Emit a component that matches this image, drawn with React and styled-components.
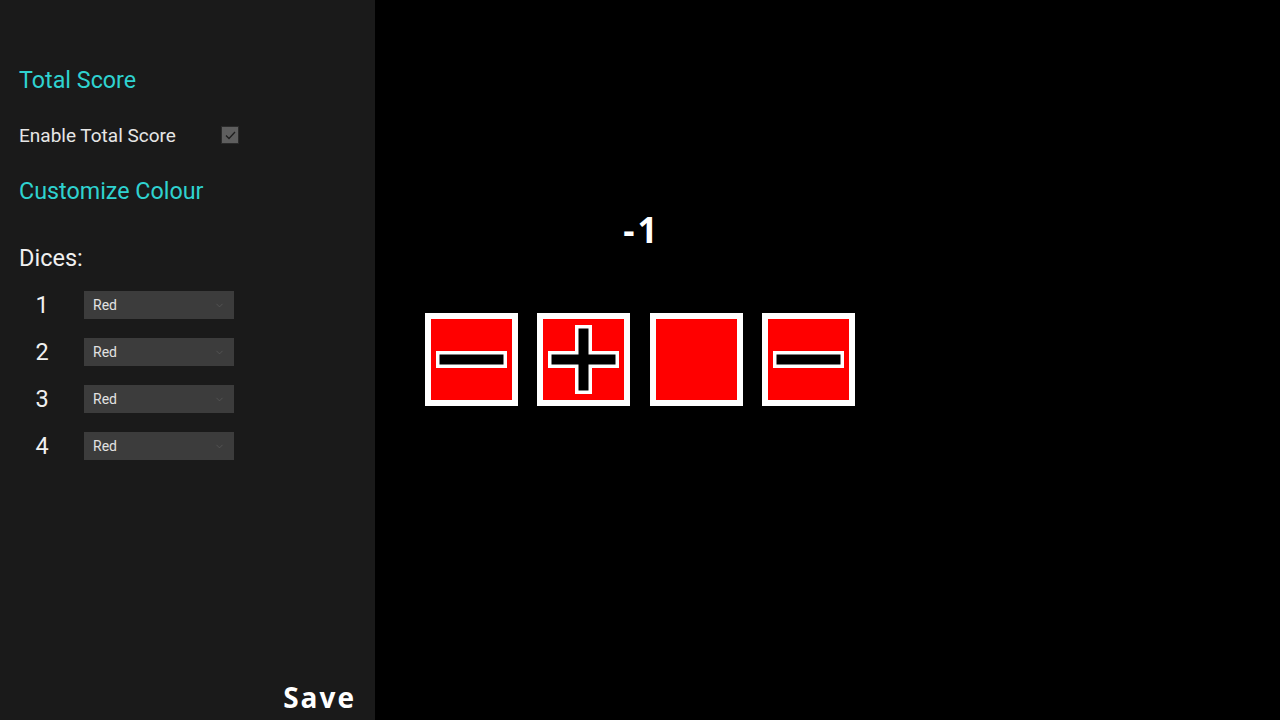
import React from 'react';
import styled, { createGlobalStyle } from 'styled-components';
import { ChevronDown } from 'lucide-react';

const GlobalStyle = createGlobalStyle`
  html, body {
    margin: 0;
    padding: 0;
    background-color: #000;
    font-family: Roboto, 'Liberation Sans', Arial, sans-serif;
  }
  * {
    box-sizing: border-box;
  }
`;

const Page = styled.div`
  display: flex;
  width: 100vw;
  height: 100vh;
  overflow: hidden;
`;

const Sidebar = styled.aside`
  width: 375px;
  flex-shrink: 0;
  display: flex;
  flex-direction: column;
  padding: 67px 21px 7px 19px;
  background-color: #1a1a1a;
`;

const SectionTitle = styled.h2`
  margin: 0 0 ${props => props.gap}px;
  font-size: 23.3px;
  font-weight: 400;
  line-height: 26px;
  color: #2fd2d0;
`;

const ToggleRow = styled.label`
  display: flex;
  align-items: center;
  height: 20px;
  margin-bottom: 33px;
  font-size: 19px;
  color: #e6e6e6;
`;

const ToggleText = styled.span`
  width: 202px;
`;

const CheckBox = styled.span`
  width: 18px;
  height: 18px;
  display: flex;
  align-items: center;
  justify-content: center;
  background-color: #5e5e5e;
  border: 1px solid #2a2a2a;
`;

const DicesLabel = styled.div`
  margin-bottom: 20px;
  font-size: 23.5px;
  line-height: 26px;
  color: #f0f0f0;
`;

const DiceList = styled.div`
  display: flex;
  flex-direction: column;
  gap: 19px;
`;

const DiceRow = styled.div`
  display: flex;
  align-items: center;
  height: 28px;
`;

const DiceNumber = styled.span`
  width: 46px;
  margin-right: 19px;
  text-align: center;
  font-size: 23.5px;
  color: #f0f0f0;
`;

const SelectWrap = styled.div`
  position: relative;
  width: 150px;
  height: 28px;
`;

const ColourSelect = styled.select`
  appearance: none;
  width: 100%;
  height: 100%;
  padding: 0 24px 0 9px;
  border: none;
  border-radius: 0;
  outline: none;
  background-color: #3c3c3c;
  color: #e2e2e2;
  font-family: Roboto, 'Liberation Sans', Arial, sans-serif;
  font-size: 14px;
`;

const SelectChevron = styled(ChevronDown)`
  position: absolute;
  right: 9px;
  top: 9px;
  color: #5c5c5c;
  pointer-events: none;
`;

const SaveButton = styled.button`
  align-self: flex-end;
  margin-top: auto;
  margin-right: -2px;
  padding: 0;
  border: none;
  background: none;
  color: #fff;
  font-family: 'Open Sans', 'Liberation Sans', sans-serif;
  font-size: 28px;
  font-weight: 700;
  letter-spacing: 2px;
  line-height: 32px;
  cursor: pointer;
`;

const Stage = styled.main`
  flex: 1;
  display: flex;
  flex-direction: column;
  align-items: center;
  padding: 210px 375px 0 0;
  background-color: #000;
`;

const Score = styled.div`
  height: 40px;
  margin-bottom: 63px;
  padding-left: 4px;
  font-family: 'Open Sans', 'Liberation Sans', sans-serif;
  font-size: 35px;
  font-weight: 700;
  letter-spacing: 3px;
  line-height: 40px;
  color: #fff;
`;

const DiceTray = styled.div`
  display: flex;
  gap: 19.5px;
`;

const Die = styled.div`
  width: 93px;
  height: 93px;
  border: 6px solid #fff;
  background-color: ${props => props.colour};
  svg {
    display: block;
  }
`;

const Minus = () => (
  <svg width="81" height="81" viewBox="0 0 81 81">
    <rect x="5" y="32" width="71" height="17" fill="#fff" />
    <rect x="8.5" y="35.5" width="64" height="10" fill="#000" />
  </svg>
);

const Plus = () => (
  <svg width="81" height="81" viewBox="0 0 81 81">
    <rect x="5" y="32" width="71" height="17" fill="#fff" />
    <rect x="32" y="6" width="17" height="69" fill="#fff" />
    <rect x="8.5" y="35.5" width="64" height="10" fill="#000" />
    <rect x="35.5" y="9.5" width="10" height="62" fill="#000" />
  </svg>
);

const dice = [
  { face: 'minus', colour: '#ff0000' },
  { face: 'plus', colour: '#ff0000' },
  { face: 'blank', colour: '#ff0000' },
  { face: 'minus', colour: '#ff0000' },
];

const faceValue = { minus: -1, plus: 1, blank: 0 };

const App = () => {
  const total = dice.reduce((sum, d) => sum + faceValue[d.face], 0);

  return (
    <Page>
      <GlobalStyle />
      <Sidebar>
        <SectionTitle gap={32}>Total Score</SectionTitle>
        <ToggleRow>
          <ToggleText>Enable Total Score</ToggleText>
          <CheckBox>
            <svg width="11" height="9" viewBox="0 0 11 9">
              <polyline points="1,4.5 4,7.5 10,1" fill="none" stroke="#1e1e1e" strokeWidth="1.3" />
            </svg>
          </CheckBox>
        </ToggleRow>
        <SectionTitle gap={41}>Customize Colour</SectionTitle>
        <DicesLabel>Dices:</DicesLabel>
        <DiceList>
          {dice.map((d, i) => (
            <DiceRow key={i}>
              <DiceNumber>{i + 1}</DiceNumber>
              <SelectWrap>
                <ColourSelect defaultValue="red">
                  <option value="red">Red</option>
                  <option value="blue">Blue</option>
                  <option value="green">Green</option>
                  <option value="yellow">Yellow</option>
                </ColourSelect>
                <SelectChevron size={11} strokeWidth={1.5} />
              </SelectWrap>
            </DiceRow>
          ))}
        </DiceList>
        <SaveButton>Save</SaveButton>
      </Sidebar>
      <Stage>
        <Score>{total}</Score>
        <DiceTray>
          {dice.map((d, i) => (
            <Die key={i} colour={d.colour}>
              {d.face === 'minus' && <Minus />}
              {d.face === 'plus' && <Plus />}
            </Die>
          ))}
        </DiceTray>
      </Stage>
    </Page>
  );
};

export default App;
